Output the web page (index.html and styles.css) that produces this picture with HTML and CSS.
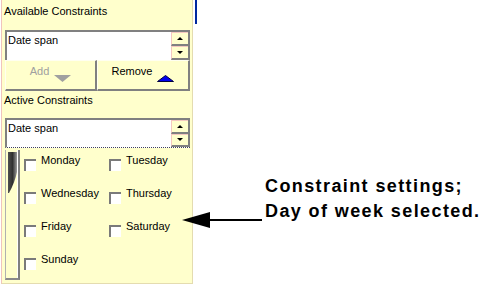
FILE: index.html
```html
<!DOCTYPE html>
<html lang="en">
<head>
    <meta charset="UTF-8">
    <title>Constraint settings</title>
    <link rel="stylesheet" href="styles.css">
</head>
<body>
    <div class="panel">
        <div class="label first">Available Constraints</div>
        <div class="listbox">
            <div class="list-text">Date span</div>
            <div class="scroller">
                <div class="scroll-btn"><span class="tri-up"></span></div>
                <div class="scroll-btn"><span class="tri-down"></span></div>
            </div>
        </div>
        <div class="button-row">
            <div class="btn disabled">
                <span>Add</span>
                <svg width="17" height="7" viewBox="0 0 17 7"><polygon points="0,0 17,0 8.5,7" fill="#a0a0a0"/></svg>
            </div>
            <div class="btn">
                <span>Remove</span>
                <svg width="17" height="7" viewBox="0 0 17 7"><polygon points="0.5,6.5 16.5,6.5 8.5,0.5" fill="#0000ee" stroke="#000040" stroke-width="1"/></svg>
            </div>
        </div>
        <div class="label second">Active Constraints</div>
        <div class="listbox active">
            <div class="list-text">Date span</div>
            <div class="scroller">
                <div class="scroll-btn"><span class="tri-up"></span></div>
                <div class="scroll-btn"><span class="tri-down"></span></div>
            </div>
        </div>
        <div class="settings">
            <div class="slider">
                <svg class="blade" width="10" height="42" viewBox="0 0 10 42">
                    <defs>
                        <linearGradient id="bladeFill" x1="0" y1="0" x2="1" y2="0">
                            <stop offset="0" stop-color="#505050"/>
                            <stop offset="0.5" stop-color="#303030"/>
                            <stop offset="1" stop-color="#9a9a9a"/>
                        </linearGradient>
                    </defs>
                    <path d="M0 0 H9 V20 Q7 30 1 41 H0 Z" fill="url(#bladeFill)"/>
                </svg>
            </div>
            <div class="days">
                <label class="day"><span class="box"></span>Monday</label>
                <label class="day"><span class="box"></span>Tuesday</label>
                <label class="day"><span class="box"></span>Wednesday</label>
                <label class="day"><span class="box"></span>Thursday</label>
                <label class="day"><span class="box"></span>Friday</label>
                <label class="day"><span class="box"></span>Saturday</label>
                <label class="day"><span class="box"></span>Sunday</label>
            </div>
        </div>
    </div>
    <div class="focus-bar"></div>
    <div class="callout">Constraint settings;<br>Day of week selected.</div>

    <svg class="arrow" width="82" height="18" viewBox="0 0 82 18">
        <polygon points="0,9 28,1 28,17" fill="#000"/>
        <rect x="27" y="8" width="53" height="2" fill="#000"/>
    </svg>
</body>
</html>
```

FILE: styles.css
```css
body { margin: 0; background: #fff; display: flex; align-items: flex-start; font-family: "Liberation Sans", Arial, sans-serif; font-size: 11px; color: #000; }

.panel {
    margin-left: 1px;
    width: 190px;
    height: 283px;
    background: #ffffcc;
    border-left: 1px solid #f0c4bc;
    border-right: 1px solid #e4dcb0;
    border-bottom: 1px solid #e4dcb0;
}
.label { line-height: 13px; padding-left: 2px; }
.label.first { padding-top: 5px; margin-bottom: 12px; }
.label.second { margin-top: 3px; margin-bottom: 11px; }

.listbox {
    margin-left: 3px;
    width: 183px;
    height: 28px;
    background: #fff;
    border-top: 2px solid #808080;
    border-left: 2px solid #808080;
    display: flex;
}
.listbox.active { height: 27px; border-bottom: 1px dotted #404060; }
.list-text { flex: 1; padding: 2px 0 0 1px; line-height: 13px; }
.scroller { width: 17px; display: flex; flex-direction: column; border-right: 2px solid #808080; }
.scroll-btn {
    flex: 1;
    background: #ffffcc;
    border-top: 1px solid #f4c8c0;
    border-left: 1px solid #f4c8c0;
    border-bottom: 2px solid #808080;
    display: flex;
    align-items: center;
    justify-content: center;
}
.tri-up, .tri-down { width: 0; height: 0; border-left: 3px solid transparent; border-right: 3px solid transparent; }
.tri-up { border-bottom: 3px solid #000; }
.tri-down { border-top: 3px solid #000; }

.button-row { display: flex; margin-left: 3px; width: 185px; height: 31px; }
.btn {
    flex: 1;
    display: flex;
    justify-content: center;
    gap: 5px;
    padding-top: 4px;
    line-height: 13px;
    background: #ffffcc;
    border-top: 1px solid #fffff0;
    border-left: 1px solid #fffff0;
    border-right: 2px solid #808080;
    border-bottom: 2px solid #808080;
}
.btn svg { margin-top: 10px; }
.btn.disabled { color: #a0a0a0; flex: 0 0 92px; box-sizing: border-box; }

.settings { display: flex; align-items: flex-start; margin-top: 2px; margin-left: 3px; }
.slider {
    width: 13px;
    height: 126px;
    border-left: 1px solid #b0b0b0;
    border-right: 2px solid #808080;
    border-bottom: 2px solid #8a8a8a;
    box-shadow: inset -1px 0 0 #fff;
    padding-left: 2px;
    padding-top: 2px;
}
.blade { display: block; }

.days { display: grid; grid-template-columns: 85px 85px; row-gap: 20px; margin-left: 4px; padding-top: 4px; }
.day { display: flex; align-items: flex-start; line-height: 13px; height: 13px; }
.box {
    width: 10px;
    height: 10px;
    margin-top: 5px;
    margin-right: 5px;
    background: #fff;
    border-top: 2px solid #7a7a7a;
    border-left: 2px solid #7a7a7a;
}

.focus-bar { margin-left: 2px; width: 2px; height: 24px; background: #0028a0; }
.callout {
    margin-left: 68px;
    margin-top: 174px;
    font-size: 18px;
    font-weight: bold;
    line-height: 25px;
    letter-spacing: 1.4px;
    white-space: nowrap;
}
.arrow { position: absolute; left: 182px; top: 211px; }
```
